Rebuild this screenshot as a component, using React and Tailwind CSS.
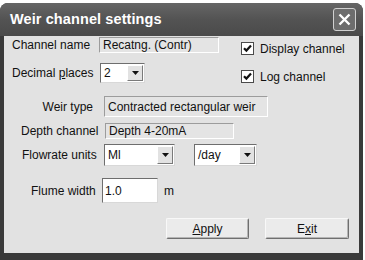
import React from 'react';

const font = { fontFamily: '"Liberation Sans", Arial, sans-serif' };

const ReadOnlyField = ({ value, className }) => (
  <div className={`flex items-center pl-[3px] bg-[#e4e4e4] border border-t-[#9c9c9c] border-l-[#9c9c9c] border-b-white border-r-white text-[12px] text-[#111] ${className}`}>
    {value}
  </div>
);

const Arrow = () => (
  <div className="w-[16px] h-full flex items-center justify-center bg-[#e2e2e2] border border-t-white border-l-white border-b-[#7a7a7a] border-r-[#7a7a7a]">
    <svg width="7" height="4" viewBox="0 0 7 4">
      <path d="M0 0h7L3.5 4z" fill="#111" />
    </svg>
  </div>
);

const Select = ({ value, className }) => (
  <div className={`flex items-stretch bg-white border border-t-[#6e6e6e] border-l-[#6e6e6e] border-b-[#d8d8d8] border-r-[#d8d8d8] p-[1px] ${className}`}>
    <span className="flex-1 flex items-center pl-[2px] text-[12px] text-[#111]">{value}</span>
    <Arrow />
  </div>
);

const Check = ({ label }) => (
  <div className="flex items-center h-[13px]">
    <div className="w-[13px] h-[13px] bg-white border border-[#4a4a4a] flex items-center justify-center">
      <svg width="9" height="9" viewBox="0 0 9 9">
        <path d="M1 4.2l2.4 2.4L8 1.6" stroke="#111" strokeWidth="2.2" fill="none" />
      </svg>
    </div>
    <span className="ml-[6px] text-[12px] text-[#111]">{label}</span>
  </div>
);

const Button = ({ children, className }) => (
  <button className={`h-[21px] rounded-[2px] bg-[#ebebeb] border border-t-[#f8f8f8] border-l-[#f8f8f8] border-b-[#6f6f6f] border-r-[#6f6f6f] shadow-[inset_-1px_-1px_0_#b5b5b5] text-[12px] text-[#111] ${className}`}>
    {children}
  </button>
);

export default function App() {
  return (
    <div className="w-[365px] h-[260px] bg-white pt-[3px]" style={font}>
      <div className="w-[363px] h-[257px] rounded-t-[8px] bg-[#3a3a3a] flex flex-col">
        {/* title bar */}
        <div className="h-[33px] flex items-center rounded-t-[8px] bg-gradient-to-b from-[#666] via-[#535353] to-[#4a4a4a] pl-[10px] pr-[7px]">
          <span className="text-white font-bold text-[14.5px] tracking-[0.1px]">Weir channel settings</span>
          <div className="ml-auto w-[23px] h-[23px] rounded-[3px] border border-[#d0d0d0] bg-[#6d6d6d] flex items-center justify-center">
            <svg width="13" height="13" viewBox="0 0 13 13">
              <path d="M1.5 1.5l10 10M11.5 1.5l-10 10" stroke="white" strokeWidth="2.4" />
            </svg>
          </div>
        </div>

        {/* content */}
        <div className="mx-[4px] h-[217px] bg-[#e2e2e2] flex flex-col text-[12px] text-[#111]">
          <div className="flex">
            <div className="w-[237px]">
              <div className="mt-[1px] h-[16px] flex items-center">
                <span className="w-[95px] pl-[8px]">Channel name</span>
                <ReadOnlyField value="Recatng. (Contr)" className="w-[120px] h-[16px]" />
              </div>
              <div className="mt-[10px] h-[20px] flex items-center">
                <span className="w-[96px] pl-[8px]">Decimal <span className="underline">p</span>laces</span>
                <Select value="2" className="w-[45px] h-[20px]" />
              </div>
            </div>
            <div className="pt-[6px] flex flex-col gap-[15px]">
              <Check label="Display channel" />
              <Check label="Log channel" />
            </div>
          </div>

          <div className="mt-[13px] h-[21px] flex items-center">
            <span className="w-[100px] text-right pr-[11px]">Weir type</span>
            <ReadOnlyField value="Contracted rectangular weir" className="w-[164px] h-[21px]" />
          </div>

          <div className="mt-[6px] h-[16px] flex items-center">
            <span className="w-[101px] pl-[17px]">Depth channel</span>
            <ReadOnlyField value="Depth 4-20mA" className="w-[129px] h-[16px]" />
          </div>

          <div className="mt-[5px] h-[22px] flex items-center">
            <span className="w-[100px] pl-[18px]">Flowrate units</span>
            <Select value="Ml" className="w-[71px] h-[22px]" />
            <Select value="/day" className="ml-[19px] w-[63px] h-[22px]" />
          </div>

          <div className="mt-[12px] h-[25px] flex items-center">
            <span className="w-[98px] pl-[27px]">Flume width</span>
            <div className="w-[56px] h-[25px] bg-white border border-t-[#6e6e6e] border-l-[#6e6e6e] border-b-[#d8d8d8] border-r-[#d8d8d8] flex items-center pl-[2px]">
              1.0
            </div>
            <span className="ml-[6px]">m</span>
          </div>

          <div className="mt-[15px] flex pl-[162px] gap-[16px]">
            <Button className="w-[83px]"><span className="underline">A</span>pply</Button>
            <Button className="w-[84px]">E<span className="underline">x</span>it</Button>
          </div>
        </div>
      </div>
    </div>
  );
}
